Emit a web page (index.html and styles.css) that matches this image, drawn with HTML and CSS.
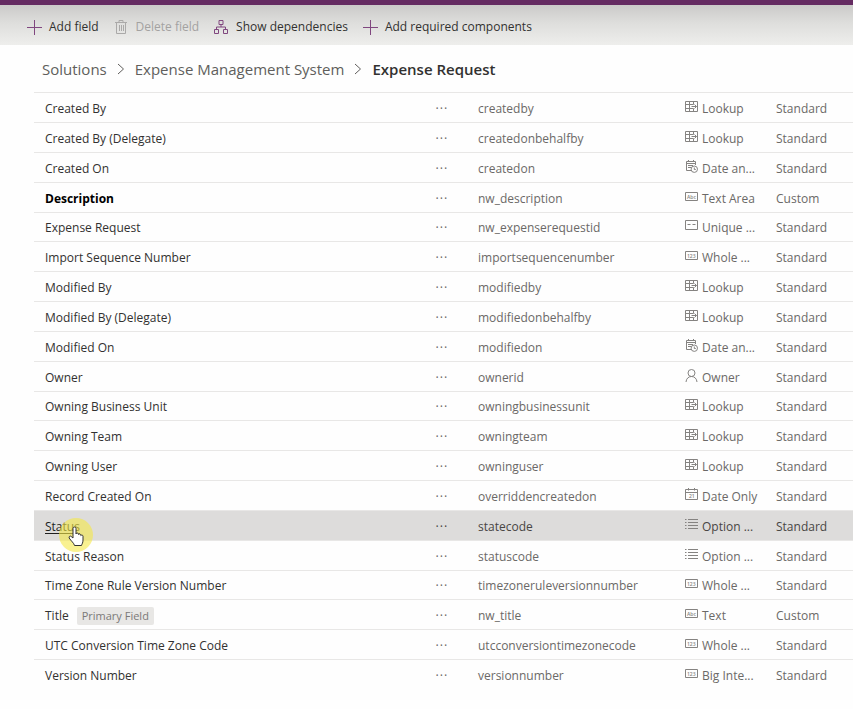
FILE: index.html
```html
<!DOCTYPE html>
<html lang="en">
<head>
<meta charset="utf-8">
<title>Expense Request</title>
<link rel="stylesheet" href="styles.css">
</head>
<body>
<svg class="sprite" aria-hidden="true">
  <symbol id="plus" viewBox="0 0 16 16"><path d="M8.500 1v15M1 8.500h15"/></symbol>
  <symbol id="trash" viewBox="0 0 16 16"><path d="M2 3.500h12M6 3.500v-2h4v2M3.500 3.500v11h9v-11M6.500 6v6M8.500 6v6M10.500 6v6"/></symbol>
  <symbol id="tree" viewBox="0 0 16 16"><path d="M6 1.500h4v4H6zM1.500 10.500h4v4h-4zM10.500 10.500h4v4h-4zM8 5.500V8M3.500 10.500V8h9v2.500"/></symbol>
  <symbol id="chevron" viewBox="0 0 8 12"><path d="M1 1l5.500 5L1 11"/></symbol>
  <symbol id="lookup" viewBox="0 0 13 13"><path d="M.5 1.500h12v10H.5zM4.500 1.500v10M8.500 1.500v3M8.500 8.500v3M.5 4.500h8M.5 8.500h8M6.500 6.500h5M9.500 4.500l2 2-2 2"/></symbol>
  <symbol id="datetime" viewBox="0 0 13 13"><path d="M6 10.500H1.500v-9h9V5M1.500 3.500h9M3.500 0v2M8.500 0v2M3 5.500h5M3 7.500h3M12.500 9.200a3.200 3.200 0 1 1-6.400 0a3.200 3.200 0 0 1 6.400 0M9.300 7.500v2h1.500"/></symbol>
  <symbol id="abc" viewBox="0 0 13 13"><path d="M.5 2.500h12v8H.5z"/><text x="2" y="8.500">Abc</text></symbol>
  <symbol id="unique" viewBox="0 0 13 13"><path d="M.5 1.500h12v9H.5zM2.500 5.500h3M7.500 5.500h3"/></symbol>
  <symbol id="number" viewBox="0 0 13 13"><path d="M.5 2.500h12v8H.5z"/><text x="2" y="8.500">123</text></symbol>
  <symbol id="person" viewBox="0 0 13 13"><path d="M10 4a3.500 3.500 0 1 1-7 0a3.500 3.500 0 0 1 7 0M1 13C1.300 9.500 3.500 7.500 6.500 7.500s5.200 2 5.500 5.500"/></symbol>
  <symbol id="date" viewBox="0 0 13 13"><path d="M.5 1.500h12v10H.5zM.5 4.500h12M3.500 0v2.500M9.500 0v2.500"/><text x="4" y="10">21</text></symbol>
  <symbol id="list" viewBox="0 0 13 13"><path d="M0 1.500h1.500M0 4.500h1.500M0 7.500h1.500M0 10.500h1.500M3 1.500h10M3 4.500h10M3 7.500h10M3 10.500h10"/></symbol>
</svg>

<header class="command-bar">
  <button class="command" type="button"><svg class="command-icon"><use href="#plus"/></svg>Add field</button>
  <button class="command" type="button" disabled><svg class="command-icon"><use href="#trash"/></svg>Delete field</button>
  <button class="command" type="button"><svg class="command-icon"><use href="#tree"/></svg>Show dependencies</button>
  <button class="command" type="button"><svg class="command-icon"><use href="#plus"/></svg>Add required components</button>
</header>

<main class="content">
  <nav class="breadcrumb" aria-label="Breadcrumb">
    <a href="#">Solutions</a>
    <svg class="chevron"><use href="#chevron"/></svg>
    <a href="#">Expense Management System</a>
    <svg class="chevron"><use href="#chevron"/></svg>
    <h1 class="current">Expense Request</h1>
  </nav>

  <table class="fields" aria-label="Fields">
    <colgroup><col><col class="col-more"><col class="col-logical"><col class="col-type"><col class="col-kind"></colgroup>
    <tbody>
      <tr><td><a href="#">Created By</a></td><td><button class="more" type="button" aria-label="More">···</button></td><td>createdby</td><td><svg class="type-icon"><use href="#lookup"/></svg>Lookup</td><td>Standard</td></tr>
      <tr><td><a href="#">Created By (Delegate)</a></td><td><button class="more" type="button" aria-label="More">···</button></td><td>createdonbehalfby</td><td><svg class="type-icon"><use href="#lookup"/></svg>Lookup</td><td>Standard</td></tr>
      <tr><td><a href="#">Created On</a></td><td><button class="more" type="button" aria-label="More">···</button></td><td>createdon</td><td><svg class="type-icon"><use href="#datetime"/></svg>Date an...</td><td>Standard</td></tr>
      <tr><td><a class="custom" href="#">Description</a></td><td><button class="more" type="button" aria-label="More">···</button></td><td>nw_description</td><td><svg class="type-icon"><use href="#abc"/></svg>Text Area</td><td>Custom</td></tr>
      <tr><td><a href="#">Expense Request</a></td><td><button class="more" type="button" aria-label="More">···</button></td><td>nw_expenserequestid</td><td><svg class="type-icon"><use href="#unique"/></svg>Unique ...</td><td>Standard</td></tr>
      <tr><td><a href="#">Import Sequence Number</a></td><td><button class="more" type="button" aria-label="More">···</button></td><td>importsequencenumber</td><td><svg class="type-icon"><use href="#number"/></svg>Whole ...</td><td>Standard</td></tr>
      <tr><td><a href="#">Modified By</a></td><td><button class="more" type="button" aria-label="More">···</button></td><td>modifiedby</td><td><svg class="type-icon"><use href="#lookup"/></svg>Lookup</td><td>Standard</td></tr>
      <tr><td><a href="#">Modified By (Delegate)</a></td><td><button class="more" type="button" aria-label="More">···</button></td><td>modifiedonbehalfby</td><td><svg class="type-icon"><use href="#lookup"/></svg>Lookup</td><td>Standard</td></tr>
      <tr><td><a href="#">Modified On</a></td><td><button class="more" type="button" aria-label="More">···</button></td><td>modifiedon</td><td><svg class="type-icon"><use href="#datetime"/></svg>Date an...</td><td>Standard</td></tr>
      <tr><td><a href="#">Owner</a></td><td><button class="more" type="button" aria-label="More">···</button></td><td>ownerid</td><td><svg class="type-icon"><use href="#person"/></svg>Owner</td><td>Standard</td></tr>
      <tr><td><a href="#">Owning Business Unit</a></td><td><button class="more" type="button" aria-label="More">···</button></td><td>owningbusinessunit</td><td><svg class="type-icon"><use href="#lookup"/></svg>Lookup</td><td>Standard</td></tr>
      <tr><td><a href="#">Owning Team</a></td><td><button class="more" type="button" aria-label="More">···</button></td><td>owningteam</td><td><svg class="type-icon"><use href="#lookup"/></svg>Lookup</td><td>Standard</td></tr>
      <tr><td><a href="#">Owning User</a></td><td><button class="more" type="button" aria-label="More">···</button></td><td>owninguser</td><td><svg class="type-icon"><use href="#lookup"/></svg>Lookup</td><td>Standard</td></tr>
      <tr><td><a href="#">Record Created On</a></td><td><button class="more" type="button" aria-label="More">···</button></td><td>overriddencreatedon</td><td><svg class="type-icon"><use href="#date"/></svg>Date Only</td><td>Standard</td></tr>
      <tr class="hovered"><td><a href="#">Status</a><span class="pointer"><svg class="hand" viewBox="0 0 16 20"><path d="M5 12V2.500a1.500 1.500 0 0 1 3 0V8a1.300 1.300 0 0 1 2.500 0v.5a1.300 1.300 0 0 1 2.300.5v.6a1.200 1.200 0 0 1 2.200.6V14c0 3-1 3.500-1.500 5.500h-7C6 17 3 15 1.200 12c-.7-1.500 1-2.500 2-1.500z"/></svg></span></td><td><button class="more" type="button" aria-label="More">···</button></td><td>statecode</td><td><svg class="type-icon"><use href="#list"/></svg>Option ...</td><td>Standard</td></tr>
      <tr><td><a href="#">Status Reason</a></td><td><button class="more" type="button" aria-label="More">···</button></td><td>statuscode</td><td><svg class="type-icon"><use href="#list"/></svg>Option ...</td><td>Standard</td></tr>
      <tr><td><a href="#">Time Zone Rule Version Number</a></td><td><button class="more" type="button" aria-label="More">···</button></td><td>timezoneruleversionnumber</td><td><svg class="type-icon"><use href="#number"/></svg>Whole ...</td><td>Standard</td></tr>
      <tr><td><a href="#">Title</a><span class="badge">Primary Field</span></td><td><button class="more" type="button" aria-label="More">···</button></td><td>nw_title</td><td><svg class="type-icon"><use href="#abc"/></svg>Text</td><td>Custom</td></tr>
      <tr><td><a href="#">UTC Conversion Time Zone Code</a></td><td><button class="more" type="button" aria-label="More">···</button></td><td>utcconversiontimezonecode</td><td><svg class="type-icon"><use href="#number"/></svg>Whole ...</td><td>Standard</td></tr>
      <tr><td><a href="#">Version Number</a></td><td><button class="more" type="button" aria-label="More">···</button></td><td>versionnumber</td><td><svg class="type-icon"><use href="#number"/></svg>Big Inte...</td><td>Standard</td></tr>
    </tbody>
  </table>
</main>
</body>
</html>
```
FILE: styles.css
```css
* { box-sizing: border-box; }

body {
  margin: 0;
  background: #fefefe;
  color: #323130;
  font-family: "Open Sans", "Noto Sans", sans-serif;
  font-size: 12px;
  line-height: 20px;
}

a { color: inherit; text-decoration: none; }
button { font: inherit; color: inherit; background: none; border: 0; padding: 0; }
svg { fill: none; stroke: currentColor; flex: none; }
.sprite { display: none; }

.command-bar {
  display: flex;
  align-items: center;
  gap: 14px;
  height: 45px;
  padding: 3px 26px 0;
  border-top: 5px solid #652b62;
  background: linear-gradient(#cbcac9, #dededc 45%, #eeeeec);
}

.command {
  display: flex;
  align-items: center;
  gap: 7px;
  white-space: nowrap;
}
.command:disabled { color: #a3a2a1; }
.command-icon { width: 16px; height: 16px; color: #80477f; }
.command:disabled .command-icon { color: #aaa9a8; }

.content { padding: 11px 0 18px 34px; }

.breadcrumb {
  display: flex;
  align-items: center;
  gap: 10px;
  height: 26px;
  margin: 0 0 10px 8px;
  color: #605e5c;
  font-size: 15px;
  white-space: nowrap;
}
.chevron { width: 8px; height: 12px; }
.current { margin: 0; color: #323130; font-size: 15px; font-weight: 600; }

.fields {
  width: 100%;
  border-collapse: separate;
  border-spacing: 0;
  table-layout: fixed;
  border-top: 1px solid #e8e7e6;
  color: #6b6967;
}
.col-more { width: 54px; }
.col-logical { width: 207px; }
.col-type { width: 91px; }
.col-kind { width: 77px; }

.fields td {
  height: 30px;
  padding: 2px 0 0;
  border-bottom: 1px solid #e8e7e6;
  white-space: nowrap;
}
.fields tr:nth-child(6n + 5) td { height: 29px; }
.fields tr:last-child td { border-bottom: 0; }
.fields td:first-child { position: relative; padding-left: 11px; color: #323130; }
.fields .custom { color: #000; font-weight: 700; }

.more {
  display: block;
  padding: 0 0 4px 11px;
  font-size: 18px;
  font-weight: 300;
  line-height: 20px;
}
.type-icon {
  width: 13px;
  height: 13px;
  margin-right: 4px;
  color: #858381;
  vertical-align: 0;
}
.sprite text { fill: currentColor; stroke: none; font-size: 5px; font-weight: 600; }

.hovered td { background: #dddcdb; color: #484644; }
.fields .hovered a { color: #201f1e; text-decoration: underline; text-underline-offset: 2px; }

.pointer {
  position: absolute;
  left: 25px;
  top: 7px;
  z-index: 1;
  width: 34px;
  height: 34px;
  border-radius: 50%;
  background: rgba(245, 232, 70, 0.6);
}
.hand { display: block; width: 16px; height: 20px; margin: 8px 0 0 9px; fill: #fff; stroke: #333; }

.badge {
  display: inline-block;
  margin-left: 8px;
  padding: 0 5px;
  border-radius: 2px;
  background: #e8e7e5;
  color: #7b7977;
  font-size: 11px;
  line-height: 18px;
}
```
